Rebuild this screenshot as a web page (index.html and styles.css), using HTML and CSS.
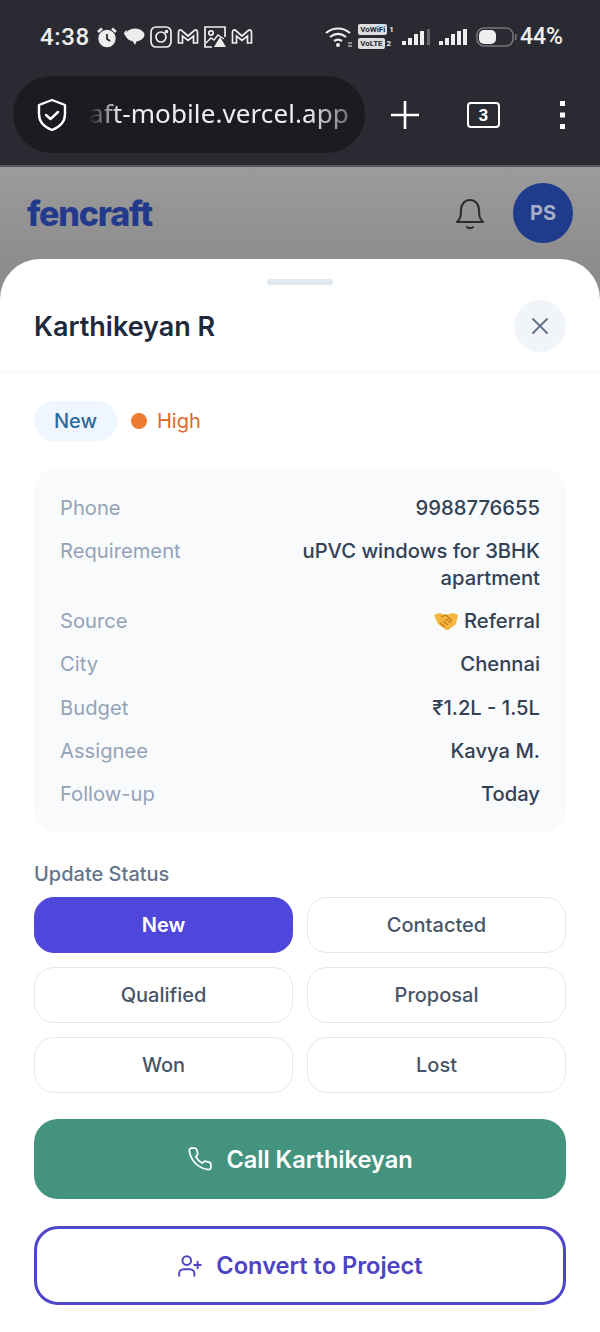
FILE: index.html
```html
<!DOCTYPE html>
<html lang="en">
<head>
  <meta charset="UTF-8">
  <meta name="viewport" content="width=device-width, initial-scale=1.0">
  <title>Fencraft - Lead detail</title>
  <link rel="stylesheet" href="styles.css">
</head>
<body>

  <!-- Phone status bar and browser toolbar -->
  <div class="chrome">
    <div class="status-bar">
      <span class="clock">4:38</span>
      <div class="status-icons">
        <svg width="22" height="22" viewBox="0 0 22 22" fill="none" stroke="#eee" stroke-width="2.4"><circle cx="11" cy="12.5" r="7.5" fill="#eee"/><path d="M11 8v5l3 2" stroke-width="1.8" stroke="#2a2a32"/><path d="M2 6l4-3.5M20 6l-4-3.5" stroke-width="2.6"/></svg>
        <svg width="22" height="22" viewBox="0 0 22 22" fill="#eee"><ellipse cx="12" cy="9" rx="9.5" ry="6.5"/><path d="M1 8c0-2 1-3 3-4L3 10z"/><path d="M9 14l5 0-2 5z"/></svg>
        <svg width="22" height="22" viewBox="0 0 22 22" fill="none" stroke="#eee" stroke-width="1.7"><rect x="1" y="1" width="20" height="20" rx="5"/><circle cx="11" cy="11" r="5"/><circle cx="16.5" cy="5.5" r="1" fill="#eee"/></svg>
        <svg width="22" height="22" viewBox="0 0 22 22" fill="none" stroke="#eee" stroke-width="1.7"><path d="M1.5 17V6c0-2 2-2.500 3.200-1.500L11 10l6.300-5.500C18.500 3.500 20.500 4 20.500 6v11h-4V10L11 14.500 5.500 10v7z"/></svg>
        <svg width="22" height="22" viewBox="0 0 22 22" fill="none" stroke="#eee" stroke-width="1.7"><path d="M8 21H1V1h20v10"/><circle cx="7" cy="7" r="2.200"/><path d="M2 17l5-5 3 2 4-5 6 4" stroke-width="1.400"/><path d="M16 11l6 10H10z" fill="#eee" stroke="none"/></svg>
        <svg width="22" height="22" viewBox="0 0 22 22" fill="none" stroke="#eee" stroke-width="1.7"><path d="M1.500 17V6c0-2 2-2.500 3.200-1.500L11 10l6.300-5.500C18.500 3.500 20.500 4 20.500 6v11h-4V10L11 14.500 5.500 10v7z"/></svg>
      </div>
      <div class="status-right">
        <svg width="28" height="22" viewBox="0 0 28 22" fill="none" stroke="#eee" stroke-width="2.200"><path d="M1 7c7-6 17-6 24 0M5 11c5-4 11-4 16 0M9 15c3-2 5-2 8 0"/><circle cx="13" cy="19" r="2" fill="#eee" stroke="none"/><path d="M23 17h4M23 20h4" stroke-width="1.200"/></svg>
        <div class="sim-tags">
          <div class="sim-row"><span class="sim-tag">VoWiFi</span><span>1</span></div>
          <div class="sim-row"><span class="sim-tag">VoLTE</span><span>2</span></div>
        </div>
        <svg class="signal" width="29" height="18" viewBox="0 0 29 18" fill="#eee"><rect x="0" y="13" width="4" height="4"/><rect x="6" y="10" width="4" height="7"/><rect x="12" y="6" width="4" height="11"/><rect x="18" y="3" width="4" height="14"/><rect x="25" y="1" width="3" height="16" fill="#666"/></svg>
        <svg class="signal" width="29" height="18" viewBox="0 0 29 18" fill="#eee"><rect x="0" y="13" width="4" height="4"/><rect x="6" y="10" width="4" height="7"/><rect x="12" y="6" width="4" height="11"/><rect x="18" y="3" width="4" height="14"/><rect x="24" y="1" width="4" height="16"/></svg>
        <svg class="battery-icon" width="42" height="22" viewBox="0 0 42 22" fill="none"><rect x="1" y="2" width="36" height="18" rx="7" stroke="#77777c" stroke-width="1.500"/><rect x="3" y="4" width="17" height="14" rx="5" fill="#eee"/><rect x="39" y="8" width="1.500" height="6" fill="#77777c"/></svg>
        <span class="battery">44%</span>
      </div>
    </div>

    <div class="toolbar">
      <div class="address-pill">
        <svg width="32" height="34" viewBox="0 0 32 34" fill="none" stroke="#fff" stroke-width="2.400" stroke-linejoin="round" stroke-linecap="round"><path d="M16 2l13 5v9c0 8-5 13-13 16C8 29 3 24 3 16V7z"/><path d="M10 17l4.500 4 7.500-7"/></svg>
        <span class="url">aft-mobile.vercel.app</span>
      </div>
      <svg class="plus" width="32" height="32" viewBox="0 0 32 32" stroke="#fff" stroke-width="2.600"><path d="M16 2v28M2 16h28"/></svg>
      <span class="tab-count">3</span>
      <svg class="more" width="8" height="28" viewBox="0 0 8 28" fill="#fff"><rect x="1" y="0" width="5" height="5"/><rect x="1" y="11.500" width="5" height="5"/><rect x="1" y="23" width="5" height="5"/></svg>
    </div>
  </div>

  <!-- App header, dimmed behind the sheet -->
  <header class="app-header">
    <span class="logo">fencraft</span>
    <div class="header-right">
      <svg width="30" height="34" viewBox="0 0 30 34" fill="none" stroke="#2b2b2e" stroke-width="2" stroke-linecap="round" stroke-linejoin="round"><path d="M2 26c3-3 4-5 4-12 0-6 4-10 9-10s9 4 9 10c0 7 1 9 4 12z"/><path d="M12 31c1 1.500 5 1.500 6 0"/></svg>
      <div class="avatar">PS</div>
    </div>
  </header>

  <!-- Lead detail sheet -->
  <div class="sheet">
    <div class="handle"></div>
    <div class="sheet-head">
      <h1>Karthikeyan R</h1>
      <button class="close-btn">
        <svg width="18" height="18" viewBox="0 0 18 18" stroke="#64748b" stroke-width="2" stroke-linecap="round"><path d="M2 2l14 14M16 2L2 16"/></svg>
      </button>
    </div>

    <div class="sheet-body">
      <div class="tags">
        <span class="status-tag">New</span>
        <span class="dot"></span>
        <span class="priority">High</span>
      </div>

      <div class="info-card">
        <div class="info-row"><span class="info-label">Phone</span><span class="info-value">9988776655</span></div>
        <div class="info-row"><span class="info-label">Requirement</span><span class="info-value wrap">uPVC windows for 3BHK apartment</span></div>
        <div class="info-row">
          <span class="info-label">Source</span>
          <span class="info-value source">
            <svg width="24" height="20" viewBox="0 0 24 20"><path d="M0 4l5-2 7 2 7-2 5 2-2 9-8 6-2 0-8-6z" fill="#f5b73d"/><path d="M7 6l5-2 6 6M6 12l5 4M9 10l5 4M12 8l5 4" fill="none" stroke="#c77a1a" stroke-width="1.300"/></svg>
            Referral
          </span>
        </div>
        <div class="info-row"><span class="info-label">City</span><span class="info-value">Chennai</span></div>
        <div class="info-row"><span class="info-label">Budget</span><span class="info-value">₹1.2L - 1.5L</span></div>
        <div class="info-row"><span class="info-label">Assignee</span><span class="info-value">Kavya M.</span></div>
        <div class="info-row"><span class="info-label">Follow-up</span><span class="info-value">Today</span></div>
      </div>

      <div class="update-label">Update Status</div>
      <div class="status-grid">
        <button class="status-btn active">New</button>
        <button class="status-btn">Contacted</button>
        <button class="status-btn">Qualified</button>
        <button class="status-btn">Proposal</button>
        <button class="status-btn">Won</button>
        <button class="status-btn">Lost</button>
      </div>

      <button class="action-btn call-btn">
        <svg width="26" height="26" viewBox="0 0 24 24" fill="none" stroke="#fff" stroke-width="1.600" stroke-linecap="round" stroke-linejoin="round"><path d="M22 16.900v3a2 2 0 0 1-2.200 2 19.800 19.800 0 0 1-8.600-3.100 19.500 19.500 0 0 1-6-6A19.800 19.800 0 0 1 2.100 4.200 2 2 0 0 1 4.100 2h3a2 2 0 0 1 2 1.700c.1 1 .4 1.900.7 2.800a2 2 0 0 1-.5 2.100L8.100 9.900a16 16 0 0 0 6 6l1.300-1.300a2 2 0 0 1 2.100-.4c.9.300 1.800.6 2.800.7a2 2 0 0 1 1.700 2z"/></svg>
        Call Karthikeyan
      </button>
      <button class="action-btn convert-btn">
        <svg width="26" height="26" viewBox="0 0 24 24" fill="none" stroke="#4c44c4" stroke-width="1.800" stroke-linecap="round" stroke-linejoin="round"><path d="M16 21v-2a4 4 0 0 0-4-4H6a4 4 0 0 0-4 4v2"/><circle cx="9" cy="7" r="4"/><path d="M19 8v6M16 11h6"/></svg>
        Convert to Project
      </button>
    </div>
  </div>

</body>
</html>
```

FILE: styles.css
```css
* {
  box-sizing: border-box;
}
body {
  margin: 0;
  width: 600px;
  height: 1332px;
  overflow: hidden;
  background-color: #8c8c8c;
  font-family: Inter, "Noto Sans", sans-serif;
}
button {
  font-family: inherit;
  cursor: pointer;
}

/* Phone chrome */
.chrome {
  height: 167px;
  background-color: #2a2a32;
  border-bottom: 2px solid #55555c;
  color: #eee;
}
.status-bar {
  height: 76px;
  padding: 0 37px 3px 40px;
  display: flex;
  align-items: center;
}
.clock {
  font-family: Roboto, sans-serif;
  font-size: 24px;
  font-weight: 500;
  letter-spacing: 0.6px;
  margin-right: 6px;
}
.status-icons {
  display: flex;
  gap: 5px;
}
.status-right {
  margin-left: auto;
  display: flex;
  align-items: center;
}
.sim-tags {
  margin-left: 5px;
  font-family: Roboto, sans-serif;
  font-size: 8px;
  font-weight: 700;
  display: flex;
  flex-direction: column;
  gap: 3px;
}
.sim-row {
  display: flex;
  align-items: center;
  gap: 2px;
}
.sim-tag {
  background-color: #ddd;
  color: #2a2a32;
  border-radius: 2px;
  padding: 0 2px;
  line-height: 11px;
}
.signal {
  margin-left: 8px;
}
.battery-icon {
  margin-left: 8px;
}
.battery {
  font-family: Roboto, sans-serif;
  font-size: 23px;
  font-weight: 500;
  margin-left: 2px;
}
.toolbar {
  display: flex;
  align-items: center;
  padding-left: 13px;
}
.address-pill {
  width: 352px;
  height: 77px;
  border-radius: 39px;
  background-color: #1b1b22;
  display: flex;
  align-items: center;
  padding-left: 23px;
  overflow: hidden;
}
.url {
  margin: -3px 0 0 21px;
  font-family: "Noto Sans", sans-serif;
  font-size: 26px;
  letter-spacing: 0.1px;
  white-space: nowrap;
  color: #eee;
  -webkit-mask-image: linear-gradient(to right, transparent 0, #000 30px, #000 220px, rgba(0,0,0,0.4) 100%);
  mask-image: linear-gradient(to right, transparent 0, #000 30px, #000 220px, rgba(0,0,0,0.4) 100%);
}
.plus {
  margin-left: 24px;
}
.tab-count {
  margin-left: 46px;
  width: 33px;
  height: 26px;
  border: 2.5px solid #fff;
  border-radius: 4px;
  font-family: Roboto, sans-serif;
  font-size: 17px;
  font-weight: 700;
  color: #fff;
  display: flex;
  align-items: center;
  justify-content: center;
}
.more {
  margin-left: 59px;
}

/* Dimmed app header */
.app-header {
  height: 92px;
  background: linear-gradient(#9b9b9b, #8d8d8d);
  padding: 0 27px;
  display: flex;
  align-items: center;
  justify-content: space-between;
}
.logo {
  font-size: 34px;
  font-weight: 800;
  letter-spacing: -1.2px;
  color: #23398c;
}
.header-right {
  display: flex;
  align-items: center;
  gap: 28px;
}
.avatar {
  width: 60px;
  height: 60px;
  border-radius: 50%;
  background-color: #1f3b8c;
  color: #a5aec6;
  font-size: 20px;
  font-weight: 700;
  display: flex;
  align-items: center;
  justify-content: center;
}

/* Bottom sheet */
.sheet {
  height: 1073px;
  background-color: #fff;
  border-radius: 40px 40px 0 0;
  overflow: hidden;
}
.handle {
  width: 66px;
  height: 6px;
  margin: 20px auto 0;
  border-radius: 3px;
  background-color: #e2e8f0;
}
.sheet-head {
  height: 88px;
  padding: 0 34px 0 34px;
  border-bottom: 1px solid #f1f5f9;
  display: flex;
  align-items: center;
  justify-content: space-between;
}
h1 {
  margin: -5px 0 0;
  font-size: 27px;
  font-weight: 600;
  color: #1e293b;
}
.close-btn {
  width: 52px;
  height: 52px;
  border: none;
  border-radius: 50%;
  background-color: #f1f5f9;
  margin-top: -6px;
  display: flex;
  align-items: center;
  justify-content: center;
}
.sheet-body {
  padding: 28px 34px 0;
}
.tags {
  display: flex;
  align-items: center;
}
.status-tag {
  width: 83px;
  height: 40px;
  border-radius: 20px;
  background-color: #eff6ff;
  color: #2b6a9c;
  font-size: 20px;
  font-weight: 500;
  display: flex;
  align-items: center;
  justify-content: center;
}
.dot {
  width: 16px;
  height: 16px;
  border-radius: 50%;
  background-color: #ed7b32;
  margin-left: 14px;
}
.priority {
  margin-left: 10px;
  font-size: 20px;
  color: #e0692a;
}
.info-card {
  margin-top: 26px;
  height: 366px;
  padding: 26.5px 26px;
  border-radius: 26px;
  background-color: #f8fafc;
  display: flex;
  flex-direction: column;
  gap: 16.3px;
}
.info-row {
  display: flex;
  justify-content: space-between;
  font-size: 20.2px;
  line-height: 27px;
}
.info-label {
  color: #94a3b8;
}
.info-value {
  color: #334155;
  font-weight: 500;
  text-align: right;
}
.wrap {
  width: 260px;
}
.source {
  display: flex;
  align-items: center;
  gap: 6px;
}
.update-label {
  margin-top: 28px;
  font-size: 20px;
  font-weight: 500;
  line-height: 27px;
  color: #64748b;
}
.status-grid {
  margin-top: 9px;
  display: grid;
  grid-template-columns: 1fr 1fr;
  gap: 14px;
}
.status-btn {
  height: 56px;
  border: 1.5px solid #e2e8f0;
  border-radius: 20px;
  background-color: #fff;
  color: #475569;
  font-size: 20px;
  font-weight: 500;
}
.status-btn.active {
  background-color: #4f46db;
  border-color: #4f46db;
  color: #fff;
  font-weight: 600;
}
.action-btn {
  width: 100%;
  height: 80px;
  border-radius: 24px;
  font-size: 23.6px;
  font-weight: 600;
  display: flex;
  align-items: center;
  justify-content: center;
  gap: 13px;
}
.call-btn {
  margin-top: 26px;
  border: none;
  background-color: #44937f;
  color: #fff;
}
.convert-btn {
  margin-top: 27px;
  height: 79px;
  border: 3px solid #4f46c8;
  background-color: #fff;
  color: #4c44c4;
}
```
